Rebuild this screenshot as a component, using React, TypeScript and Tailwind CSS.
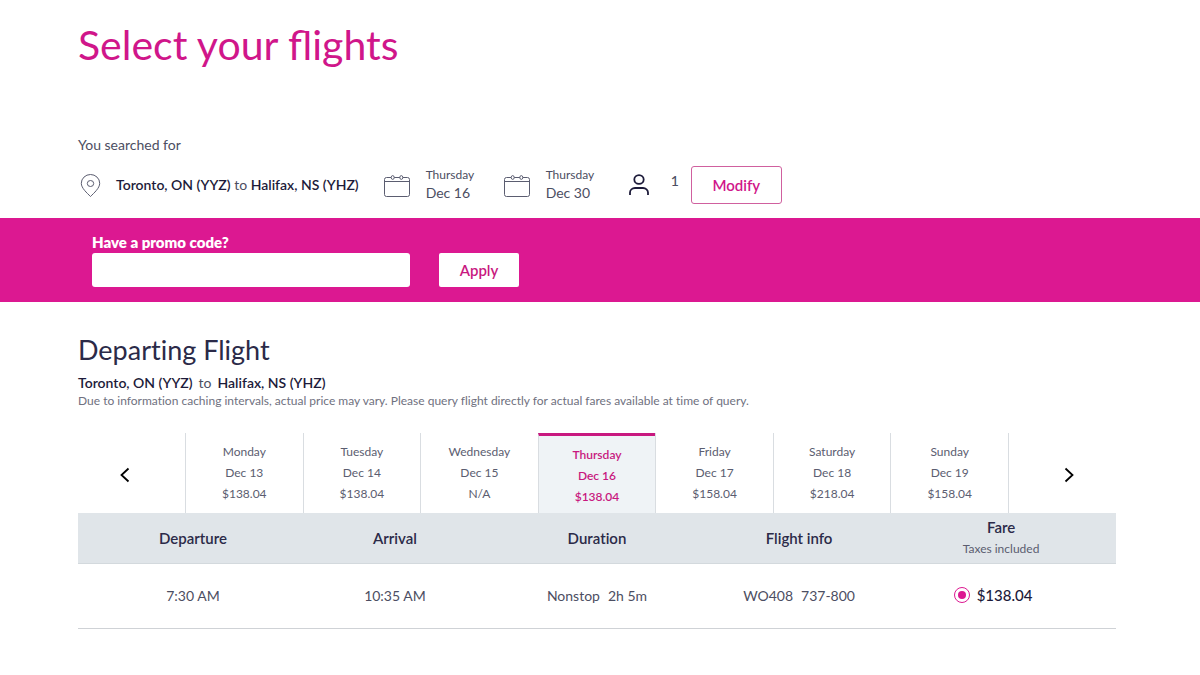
import React from 'react';

const days = [
  { day: 'Monday', date: 'Dec 13', price: '$138.04' },
  { day: 'Tuesday', date: 'Dec 14', price: '$138.04' },
  { day: 'Wednesday', date: 'Dec 15', price: 'N/A' },
  { day: 'Thursday', date: 'Dec 16', price: '$138.04', selected: true },
  { day: 'Friday', date: 'Dec 17', price: '$158.04' },
  { day: 'Saturday', date: 'Dec 18', price: '$218.04' },
  { day: 'Sunday', date: 'Dec 19', price: '$158.04' },
];

const PinIcon = () => (
  <svg className="h-6 w-6 shrink-0 text-[#5b5d70]" viewBox="0 0 24 24" fill="none" stroke="currentColor" aria-hidden="true">
    <path d="M12.500 23.500C9 20 3.300 15.100 3.300 10.300a9.200 8.800 0 0 1 18.400 0C21.700 15.100 16 20 12.500 23.500Z" />
    <ellipse cx="12.500" cy="10.500" rx="3.200" ry="3" />
  </svg>
);

const CalendarIcon = () => (
  <svg className="h-6 w-7 shrink-0 text-[#5b5d70]" viewBox="0 0 28 24" fill="none" stroke="currentColor" aria-hidden="true">
    <path d="M8 4.500H3.500a2 2 0 0 0-2 2v15a2 2 0 0 0 2 2h21a2 2 0 0 0 2-2v-15a2 2 0 0 0-2-2h-4.700M11.200 4.500h5.600M1.500 8.500h25" />
    <ellipse cx="9.700" cy="4.500" rx="1.500" ry="1.900" />
    <ellipse cx="18.300" cy="4.500" rx="1.500" ry="1.900" />
  </svg>
);

const PersonIcon = () => (
  <svg className="h-6 w-6 shrink-0 text-[#1d1b3a]" viewBox="0 0 24 24" fill="none" stroke="currentColor" strokeWidth="1.8" aria-hidden="true">
    <ellipse cx="12" cy="6.500" rx="4.700" ry="4.400" />
    <path d="M3 22v-2.500a5 4.500 0 0 1 5-4.500h8a5 4.500 0 0 1 5 4.500V22" />
  </svg>
);

const Chevron = ({ d }: { d: string }) => (
  <svg className="h-4 w-3" viewBox="0 0 12 16" fill="none" stroke="currentColor" strokeWidth="1.8" aria-hidden="true">
    <path d={d} />
  </svg>
);

const SearchSummary = () => {
  return (
    <section className="pr-[84px] pl-[78px]">
      <h1 className="pt-5 text-[41px] leading-[50px] text-[#d0168a] [font-variant-ligatures:normal]">
        Select your flights
      </h1>
      <p className="mt-[65px] text-[14px] leading-5">You searched for</p>
      <div className="mt-[11px] flex flex-wrap items-center pb-3.5">
        <PinIcon />
        <p className="ml-3.5 text-[14px] leading-5">
          <strong className="font-semibold text-[#1d1b3a]">Toronto, ON (YYZ)</strong> to{' '}
          <strong className="font-semibold text-[#1d1b3a]">Halifax, NS (YHZ)</strong>
        </p>
        <div className="ml-6 flex w-[120px] items-center gap-[15px]">
          <CalendarIcon />
          <div>
            <p className="text-[12px] leading-4">Thursday</p>
            <p className="text-[14px] leading-5">Dec 16</p>
          </div>
        </div>
        <div className="flex w-[120px] items-center gap-[15px]">
          <CalendarIcon />
          <div>
            <p className="text-[12px] leading-4">Thursday</p>
            <p className="text-[14px] leading-5">Dec 30</p>
          </div>
        </div>
        <div className="ml-1 flex gap-5">
          <PersonIcon />
          <span className="text-[14px] leading-4 font-medium">1</span>
        </div>
        <button
          type="button"
          className="ml-3 h-[38px] w-[91px] rounded-[3px] border border-[#d0609f] text-[15px] font-semibold text-[#d0168a]"
        >
          Modify
        </button>
      </div>
    </section>
  );
};

const PromoBar = () => {
  return (
    <form className="flex h-[84px] items-end gap-[29px] bg-[#dc1891] pr-[84px] pb-[15px] pl-[92px]">
      <div className="flex w-[318px] flex-col">
        <label htmlFor="promo" className="pb-px text-[15px] leading-5 font-extrabold text-white">
          Have a promo code?
        </label>
        <input id="promo" type="text" className="h-[34px] rounded-[3px] bg-white px-3 text-[14px]" />
      </div>
      <button type="button" className="h-[34px] w-20 rounded-[2px] bg-white text-[15px] font-semibold text-[#c8187f]">
        Apply
      </button>
    </form>
  );
};

const DateStrip = () => {
  return (
    <div className="mt-6 flex h-20 text-[12px] leading-[21px] text-[#5b5d70]">
      <button type="button" aria-label="Earlier dates" className="flex w-[107px] items-center pt-1 pl-[41px] text-black">
        <Chevron d="M9.500 1.500 2.500 8l7 6.500" />
      </button>
      <div className="grid flex-1 grid-cols-7 border-r border-[#d9dde1]">
        {days.map((d) => (
          <button
            key={d.date}
            type="button"
            className={
              d.selected
                ? 'flex flex-col items-center border-t-3 border-l border-t-[#c8187f] border-l-[#d9dde1] bg-[#eff3f6] pt-2 font-semibold text-[#c8187f]'
                : 'flex flex-col items-center border-l border-[#d9dde1] pt-2'
            }
          >
            <span>{d.day}</span>
            <span>{d.date}</span>
            <span>{d.price}</span>
          </button>
        ))}
      </div>
      <button type="button" aria-label="Later dates" className="flex w-[107px] items-center justify-end pt-1 pr-[41px] text-black">
        <Chevron d="m2.500 1.500 7 6.500-7 6.500" />
      </button>
    </div>
  );
};

const FlightTable = () => {
  return (
    <table className="w-full table-fixed text-center text-[14px]">
      <thead>
        <tr className="h-[50px] border-b border-[#d3d9dd] bg-[#e0e5e9] text-[15px] text-[#2b2a48]">
          <th className="w-[20.8%] p-0 pl-3.5 font-semibold">Departure</th>
          <th className="p-0 font-semibold">Arrival</th>
          <th className="p-0 font-semibold">Duration</th>
          <th className="p-0 font-semibold">Flight info</th>
          <th className="w-[20.8%] p-0 pr-3.5 font-semibold">
            <span className="block leading-[22px]">Fare</span>
            <span className="block text-[12px] leading-[22px] font-normal text-[#5b5d70]">Taxes included</span>
          </th>
        </tr>
      </thead>
      <tbody>
        <tr className="h-[65px] border-b border-[#cfd2d6]">
          <td className="p-0 pl-3.5">7:30 AM</td>
          <td className="p-0">10:35 AM</td>
          <td className="p-0">
            <span className="mr-2">Nonstop</span>
            <span>2h 5m</span>
          </td>
          <td className="p-0">
            <span className="mr-2">WO408</span>
            <span>737-800</span>
          </td>
          <td className="p-0 pr-3.5">
            <label className="flex items-center justify-center gap-[7px] pr-4 pb-0.5 text-[15px] leading-5 font-medium text-[#1d1b3a]">
              <input
                type="radio"
                name="fare"
                defaultChecked
                className="h-4 w-4 appearance-none rounded-full border border-[#dc1891] bg-white p-[3px] checked:bg-[#dc1891] checked:bg-clip-content"
              />
              $138.04
            </label>
          </td>
        </tr>
      </tbody>
    </table>
  );
};

const App = () => {
  return (
    <main className="bg-white font-['Lato',sans-serif] text-[#4c4e62] [font-variant-ligatures:none]">
      <SearchSummary />
      <PromoBar />
      <section className="pr-[84px] pl-[78px]">
        <h2 className="pt-8 text-[27px] leading-8 text-[#2b2a48]">Departing Flight</h2>
        <p className="mt-[7px] text-[14px] leading-5">
          <strong className="mr-1.5 font-semibold text-[#1d1b3a]">Toronto, ON (YYZ)</strong>
          to
          <strong className="ml-1.5 font-semibold text-[#1d1b3a]">Halifax, NS (YHZ)</strong>
        </p>
        <p className="text-[12px] leading-4 text-[#6f7180]">
          Due to information caching intervals, actual price may vary. Please query flight directly for actual fares
          available at time of query.
        </p>
        <DateStrip />
        <FlightTable />
      </section>
    </main>
  );
};

export default App;
